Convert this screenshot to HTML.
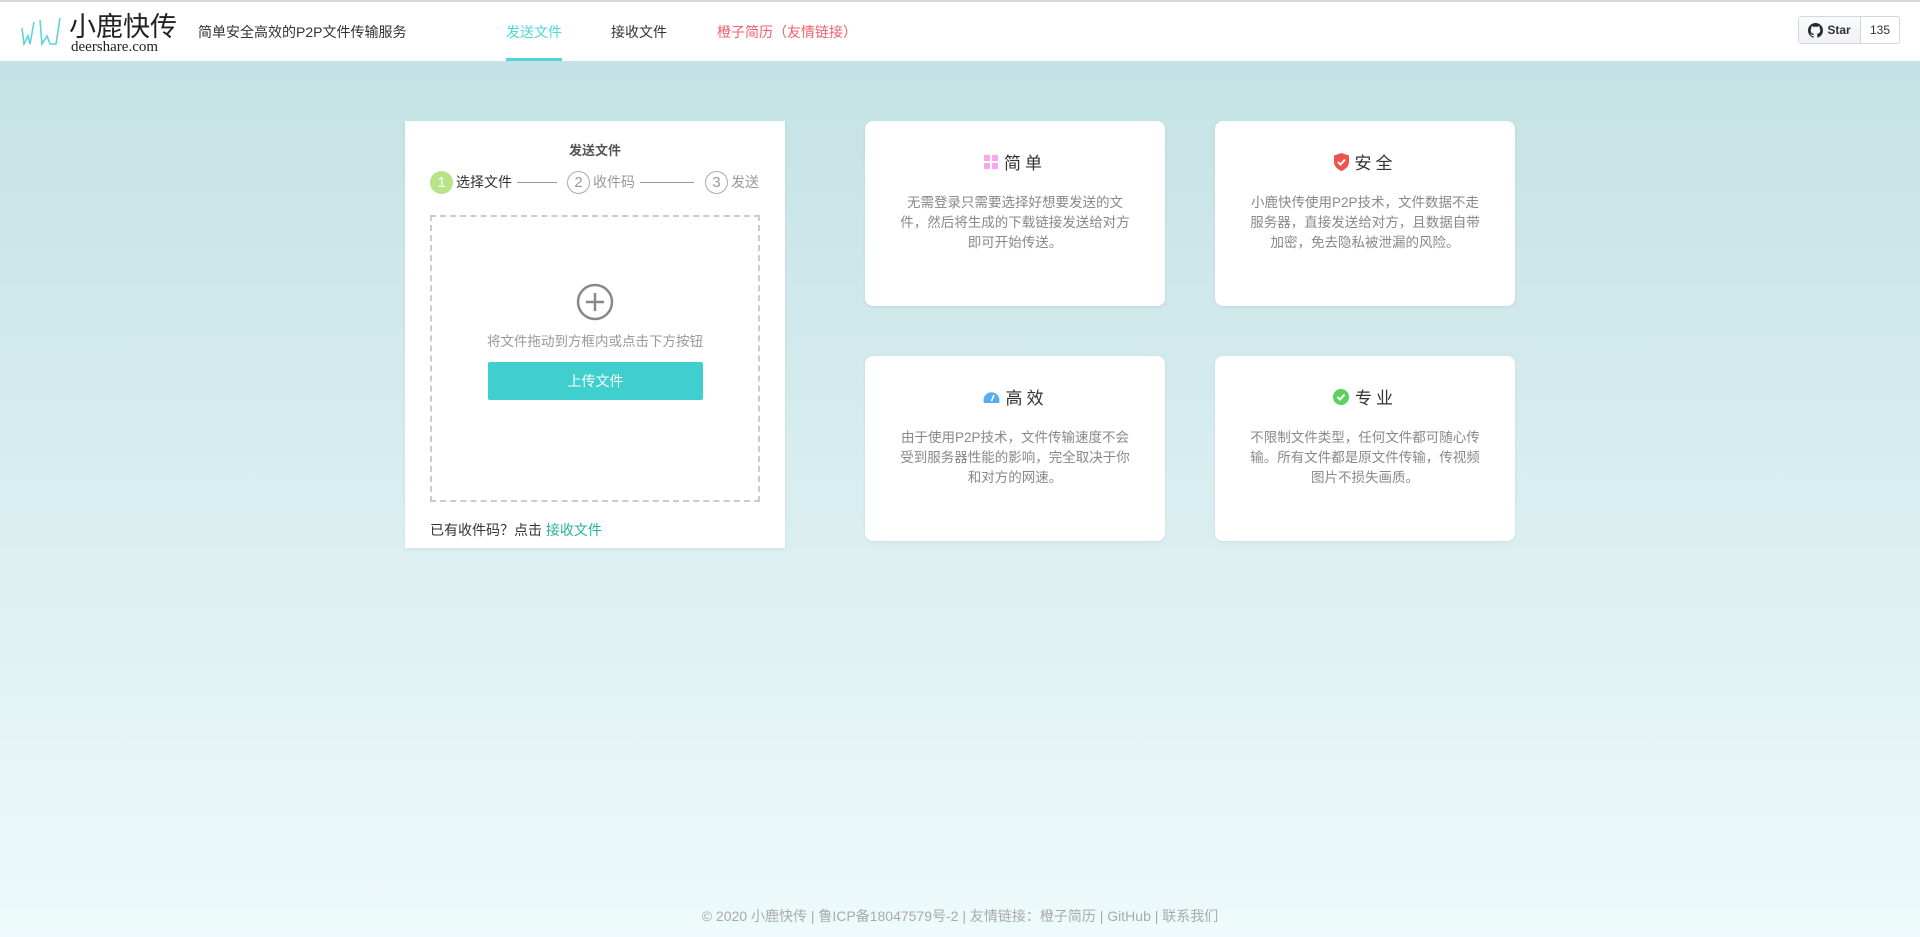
<!DOCTYPE html>
<html><head><meta charset="utf-8"><style>
*{margin:0;padding:0;box-sizing:border-box}
body{width:1920px;height:937px;overflow:hidden;font-family:"Liberation Sans","Noto Sans CJK SC",sans-serif;background:linear-gradient(#c1e0e3,#eefafb);position:relative;color:#333}
.hd{position:absolute;left:0;top:0;width:1920px;height:61px;background:#fff;border-top:2px solid #d6d6d6}
.a{position:absolute;white-space:nowrap}
.card{position:absolute;background:#fff;border-radius:8px;box-shadow:0 1px 3px rgba(0,0,0,.08)}
.ft{text-align:center}
.ft h3{position:absolute;left:0;right:0;top:28px;font-size:17px;font-weight:normal;letter-spacing:4px;color:#333;display:flex;justify-content:center;align-items:center;gap:6px}
.ft p{position:absolute;left:30px;right:30px;top:72px;font-size:13.5px;line-height:20px;color:#888}
.sc{display:inline-block;width:23px;height:23px;border-radius:50%;border:1px solid #aaa;text-align:center;line-height:21px;font-size:15px;color:#999}
.st span{line-height:23px}
</style></head><body>
<div class="hd">
<svg class="a" style="left:20px;top:12px" width="42" height="34" viewBox="0 0 42 34"><g fill="none" stroke="#5fd3dc" stroke-width="1.6"><path d="M2 14 L4 30 L8 22 L10 30 L14 8"/><path d="M20 6 L22 30 L27 22 L30 30 L36 30 L40 4"/></g></svg>
<div class="a" style="left:69px;top:12px;font-size:27px;line-height:27px;color:#222">小鹿快传</div>
<div class="a" style="left:71px;top:38px;font-size:15px;line-height:15px;color:#222;font-family:'Liberation Serif',serif">deershare.com</div>
<div class="a" style="left:198px;top:20px;font-size:14px;color:#333">简单安全高效的P2P文件传输服务</div>
<div class="a" style="left:506px;top:20px;font-size:14px;color:#4fd6dd">发送文件</div>
<div class="a" style="left:506px;top:56px;width:56px;height:3px;background:#4fd6dd"></div>
<div class="a" style="left:611px;top:20px;font-size:14px;color:#333">接收文件</div>
<div class="a" style="left:717px;top:20px;font-size:14px;color:#f0606a">橙子简历（友情链接）</div>
<div class="a" style="left:1798px;top:14px;width:102px;height:28px;border:1px solid #d4d6d8;border-radius:3px;display:flex;font-size:12px;font-weight:bold;color:#333">
<div style="width:62px;background:linear-gradient(#fafbfc,#eff3f6);display:flex;align-items:center;justify-content:center;gap:4px;border-right:1px solid #d4d6d8"><svg width="15" height="15" viewBox="0 0 16 16"><path fill="#24292e" d="M8 0C3.58 0 0 3.58 0 8c0 3.54 2.29 6.53 5.47 7.59.4.07.55-.17.55-.38v-1.33c-2.23.48-2.7-1.07-2.7-1.07-.36-.92-.89-1.17-.89-1.17-.73-.5.05-.49.05-.49.8.06 1.23.83 1.23.83.72 1.22 1.87.87 2.33.66.07-.52.28-.87.5-1.07-1.78-.2-3.65-.89-3.65-3.95 0-.87.31-1.59.82-2.15-.08-.2-.36-1.02.08-2.12 0 0 .67-.21 2.2.82a7.6 7.6 0 0 1 4 0c1.53-1.04 2.2-.82 2.2-.82.44 1.1.16 1.92.08 2.12.51.56.82 1.27.82 2.15 0 3.07-1.87 3.75-3.65 3.95.29.25.54.73.54 1.48v2.2c0 .21.15.46.55.38A8 8 0 0 0 16 8c0-4.42-3.58-8-8-8z"/></svg>Star</div>
<div style="flex:1;display:flex;align-items:center;justify-content:center;font-weight:normal">135</div></div>
</div>

<div class="card" style="left:405px;top:121px;width:380px;height:427px;border-radius:0">
<div class="a" style="left:0;right:0;top:19px;text-align:center;font-size:13px;font-weight:bold;color:#555">发送文件</div>
<div class="a st" style="left:25px;top:50px;display:flex;align-items:center;font-size:14px;color:#999">
<span class="sc" style="background:#b9e38a;border-color:#b9e38a;color:#fff;line-height:21px">1</span><span style="margin-left:3px;color:#333">选择文件</span><span style="width:40px;height:1px;background:#999;margin:0 10px 0 5px"></span>
<span class="sc" style="line-height:21px">2</span><span style="margin-left:3px">收件码</span><span style="width:54px;height:1px;background:#999;margin:0 11px 0 5px"></span>
<span class="sc" style="line-height:21px">3</span><span style="margin-left:3px">发送</span></div>
<div class="a" style="left:25px;top:94px;width:330px;height:287px;border:2px dashed #ccc"></div>
<svg class="a" style="left:171px;top:162px" width="38" height="38" viewBox="0 0 38 38"><circle cx="19" cy="19" r="17" fill="none" stroke="#888" stroke-width="2.5"/><path d="M19 10V28M10 19H28" stroke="#888" stroke-width="2.5"/></svg>
<div class="a" style="left:0;right:0;top:209px;text-align:center;font-size:13.5px;color:#999">将文件拖动到方框内或点击下方按钮</div>
<div class="a" style="left:83px;top:241px;width:215px;height:38px;background:#40cfcf;border-radius:2px;color:#fff;font-size:14px;text-align:center;line-height:38px">上传文件</div>
<div class="a" style="left:25px;top:399px;font-size:14px;color:#333">已有收件码？点击 <span style="color:#2ab0a0">接收文件</span></div>
</div>

<div class="card ft" style="left:865px;top:121px;width:300px;height:185px"><h3><svg width="14" height="14"><rect x="0" y="0" width="6" height="6" fill="#f7a8ee"/><rect x="8" y="0" width="6" height="6" fill="#f7a8ee"/><rect x="0" y="8" width="6" height="6" fill="#f7a8ee"/><rect x="8" y="8" width="6" height="6" fill="#f7a8ee"/></svg>简单</h3><p>无需登录只需要选择好想要发送的文件，然后将生成的下载链接发送给对方即可开始传送。</p></div>
<div class="card ft" style="left:1215px;top:121px;width:300px;height:185px"><h3><svg width="15" height="18" viewBox="0 0 15 18"><path d="M7.5 0L15 2.5V9c0 4-3.5 7.5-7.5 9C3.5 16.5 0 13 0 9V2.5z" fill="#ef5350"/><path d="M4 9l2.5 2.5L11 6.5" stroke="#fff" stroke-width="2" fill="none"/></svg>安全</h3><p>小鹿快传使用P2P技术，文件数据不走服务器，直接发送给对方，且数据自带加密，免去隐私被泄漏的风险。</p></div>
<div class="card ft" style="left:865px;top:356px;width:300px;height:185px"><h3><svg width="17" height="15" viewBox="0 0 17 15"><path d="M1 14A8 8 0 1 1 16 14Z" fill="#5aaef0"/><path d="M8.5 12L11 6" stroke="#fff" stroke-width="1.6"/></svg>高效</h3><p>由于使用P2P技术，文件传输速度不会受到服务器性能的影响，完全取决于你和对方的网速。</p></div>
<div class="card ft" style="left:1215px;top:356px;width:300px;height:185px"><h3><svg width="16" height="16"><circle cx="8" cy="8" r="8" fill="#5dd05d"/><path d="M4.5 8l2.5 2.5L11.5 5.5" stroke="#fff" stroke-width="2" fill="none"/></svg>专业</h3><p>不限制文件类型，任何文件都可随心传输。所有文件都是原文件传输，传视频图片不损失画质。</p></div>

<div class="a" style="left:0;right:0;top:906px;text-align:center;font-size:14px;color:#aaa">© 2020 小鹿快传 | 鲁ICP备18047579号-2 | 友情链接：橙子简历 | GitHub | 联系我们</div>
</body></html>
